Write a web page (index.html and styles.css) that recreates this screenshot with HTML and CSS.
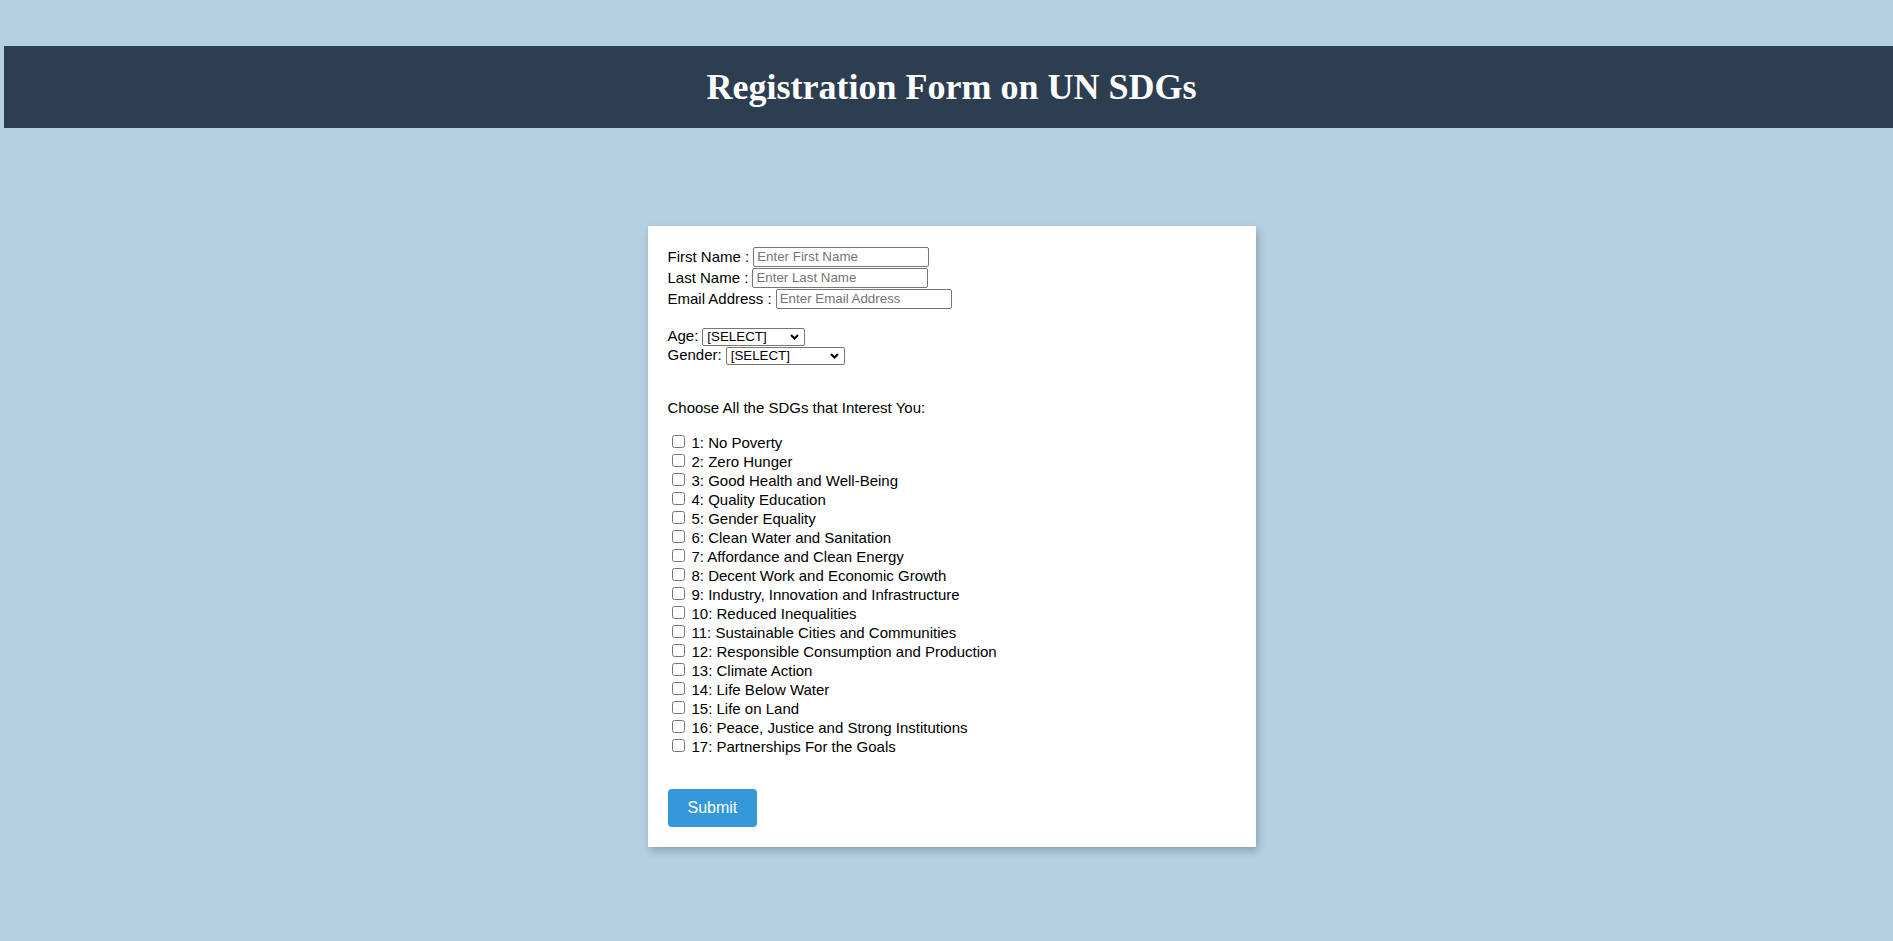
FILE: index.html
```html
<!DOCTYPE html>
<html lang="en">
<head>
<meta charset="utf-8">
<title>Registration Form on UN SDGs</title>
<link rel="stylesheet" href="styles.css">
</head>
<body>
<header class="site-header">
  <h1 class="site-title">Registration Form on UN SDGs</h1>
</header>
<main class="page">
  <form class="card" onsubmit="return false;">
    <div class="fields">
      <div class="field-row"><label for="fname">First Name :</label><input class="text-input" id="fname" type="text" placeholder="Enter First Name"></div>
      <div class="field-row"><label for="lname">Last Name :</label><input class="text-input" id="lname" type="text" placeholder="Enter Last Name"></div>
      <div class="field-row"><label for="email">Email Address :</label><input class="text-input" id="email" type="email" placeholder="Enter Email Address"></div>
    </div>
    <div class="selects">
      <div class="select-row"><label for="age">Age:</label><span class="select-wrap"><select class="select select-age" id="age"><option>[SELECT]</option><option>Under 18</option><option>18 - 24</option><option>25 - 34</option><option>35 - 44</option><option>45+</option></select><svg class="chevron" width="9" height="6" viewBox="0 0 9 6" aria-hidden="true"><path d="M1 1 L4.5 4.5 L8 1" fill="none" stroke="#000" stroke-width="2"/></svg></span></div>
      <div class="select-row"><label for="gender">Gender:</label><span class="select-wrap"><select class="select select-gender" id="gender"><option>[SELECT]</option><option>Male</option><option>Female</option><option>Prefer not to say</option></select><svg class="chevron" width="9" height="6" viewBox="0 0 9 6" aria-hidden="true"><path d="M1 1 L4.5 4.5 L8 1" fill="none" stroke="#000" stroke-width="2"/></svg></span></div>
    </div>
    <p class="sdg-title">Choose All the SDGs that Interest You:</p>
    <ul class="sdg-list">
      <li class="sdg-item"><label class="sdg-label"><input type="checkbox" class="sdg-check"><span class="sdg-text">1: No Poverty</span></label></li>
      <li class="sdg-item"><label class="sdg-label"><input type="checkbox" class="sdg-check"><span class="sdg-text">2: Zero Hunger</span></label></li>
      <li class="sdg-item"><label class="sdg-label"><input type="checkbox" class="sdg-check"><span class="sdg-text">3: Good Health and Well-Being</span></label></li>
      <li class="sdg-item"><label class="sdg-label"><input type="checkbox" class="sdg-check"><span class="sdg-text">4: Quality Education</span></label></li>
      <li class="sdg-item"><label class="sdg-label"><input type="checkbox" class="sdg-check"><span class="sdg-text">5: Gender Equality</span></label></li>
      <li class="sdg-item"><label class="sdg-label"><input type="checkbox" class="sdg-check"><span class="sdg-text">6: Clean Water and Sanitation</span></label></li>
      <li class="sdg-item"><label class="sdg-label"><input type="checkbox" class="sdg-check"><span class="sdg-text">7: Affordance and Clean Energy</span></label></li>
      <li class="sdg-item"><label class="sdg-label"><input type="checkbox" class="sdg-check"><span class="sdg-text">8: Decent Work and Economic Growth</span></label></li>
      <li class="sdg-item"><label class="sdg-label"><input type="checkbox" class="sdg-check"><span class="sdg-text">9: Industry, Innovation and Infrastructure</span></label></li>
      <li class="sdg-item"><label class="sdg-label"><input type="checkbox" class="sdg-check"><span class="sdg-text">10: Reduced Inequalities</span></label></li>
      <li class="sdg-item"><label class="sdg-label"><input type="checkbox" class="sdg-check"><span class="sdg-text">11: Sustainable Cities and Communities</span></label></li>
      <li class="sdg-item"><label class="sdg-label"><input type="checkbox" class="sdg-check"><span class="sdg-text">12: Responsible Consumption and Production</span></label></li>
      <li class="sdg-item"><label class="sdg-label"><input type="checkbox" class="sdg-check"><span class="sdg-text">13: Climate Action</span></label></li>
      <li class="sdg-item"><label class="sdg-label"><input type="checkbox" class="sdg-check"><span class="sdg-text">14: Life Below Water</span></label></li>
      <li class="sdg-item"><label class="sdg-label"><input type="checkbox" class="sdg-check"><span class="sdg-text">15: Life on Land</span></label></li>
      <li class="sdg-item"><label class="sdg-label"><input type="checkbox" class="sdg-check"><span class="sdg-text">16: Peace, Justice and Strong Institutions</span></label></li>
      <li class="sdg-item"><label class="sdg-label"><input type="checkbox" class="sdg-check"><span class="sdg-text">17: Partnerships For the Goals</span></label></li>
    </ul>
    <button class="submit-btn" type="submit">Submit</button>
  </form>
</main>
</body>
</html>
```

FILE: styles.css
```css
html, body {
  margin: 0;
  padding: 0;
}

body {
  background: #b4d0e2;
  font-family: "Liberation Sans", Arial, sans-serif;
  font-size: 15px;
  color: #000;
  min-height: 941px;
}

.site-header {
  margin: 46px 0 0 4px;
  height: 82px;
  background: #2c3e50;
  display: flex;
  align-items: center;
  justify-content: center;
  padding-left: 6px;
}

.site-title {
  margin: 0;
  font-family: "Liberation Serif", "Times New Roman", serif;
  font-weight: bold;
  font-size: 36px;
  line-height: 1;
  color: #fff;
}

.page {
  display: flex;
  justify-content: center;
  padding-left: 10px;
  margin-top: 98px;
}

.card {
  width: 608px;
  box-sizing: border-box;
  background: #fff;
  padding: 20px;
  box-shadow: 2px 4px 8px rgba(0, 0, 0, 0.22);
  display: flex;
  flex-direction: column;
  align-items: flex-start;
}

.fields {
  display: flex;
  flex-direction: column;
}

.field-row {
  height: 21px;
  display: flex;
  align-items: center;
}

.text-input {
  margin: 0 0 0 4px;
  width: 176px;
  height: 20px;
  box-sizing: border-box;
  border: 1px solid #767676;
  border-radius: 2px;
  padding: 0 3px;
  font-family: "Liberation Sans", Arial, sans-serif;
  font-size: 13.33px;
  color: #000;
  background: #fff;
}

.text-input::placeholder {
  color: #757575;
}

.selects {
  margin-top: 18px;
  display: flex;
  flex-direction: column;
}

.select-row {
  height: 19px;
  display: flex;
  align-items: flex-start;
  line-height: 17px;
}

.select-wrap {
  position: relative;
  display: inline-flex;
  margin: 0.5px 0 0 4px;
}

.select {
  -webkit-appearance: none;
  appearance: none;
  margin: 0;
  height: 18px;
  box-sizing: border-box;
  font-family: "Liberation Sans", Arial, sans-serif;
  font-size: 13.33px;
  line-height: 16px;
  color: #000;
  background: #fff;
  border: 1px solid #767676;
  border-radius: 2px;
  padding: 0 16px 0 4px;
}

.chevron {
  position: absolute;
  right: 6px;
  top: 6px;
  pointer-events: none;
}

.select-age {
  width: 103px;
}

.select-gender {
  width: 119px;
}

.sdg-title {
  margin: 34px 0 0;
  line-height: 17px;
}

.sdg-list {
  list-style: none;
  margin: 16px 0 0;
  padding: 0;
}

.sdg-item {
  height: 19px;
}

.sdg-label {
  display: flex;
  align-items: flex-start;
  height: 19px;
}

.sdg-check {
  width: 13px;
  height: 13px;
  margin: 3px 3px 3px 4px;
  flex: none;
}

.sdg-text {
  margin-left: 4px;
  line-height: 21px;
  white-space: nowrap;
}

.submit-btn {
  margin-top: 34px;
  background: #3498db;
  color: #fff;
  border: none;
  border-radius: 4px;
  padding: 10px 20px;
  font-family: "Liberation Sans", Arial, sans-serif;
  font-size: 16px;
  line-height: 18px;
  cursor: pointer;
}
```
